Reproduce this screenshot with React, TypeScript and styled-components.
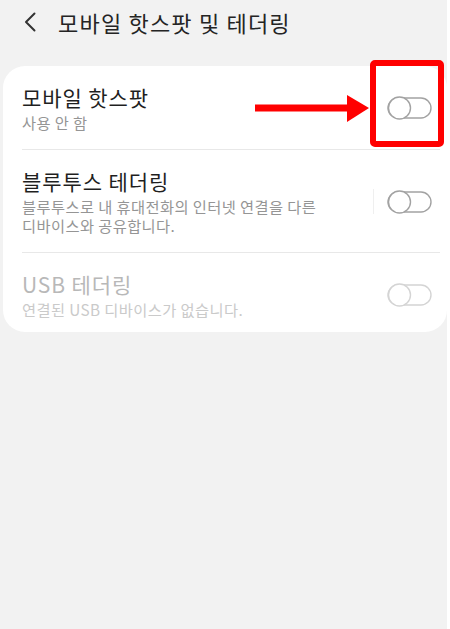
import React from 'react';
import styled, { createGlobalStyle } from 'styled-components';

const GlobalStyle = createGlobalStyle`
  html, body {
    margin: 0;
    padding: 0;
    background: #ffffff;
  }
  body {
    font-family: "Noto Sans CJK KR", "Noto Sans", sans-serif;
  }
`;

const Screen = styled.div`
  position: relative;
  width: 447px;
  height: 629px;
  background: #f2f2f2;
  overflow: hidden;
`;

const Header = styled.header`
  display: flex;
  align-items: center;
  gap: 22px;
  height: 44px;
  padding-left: 24px;
`;

const HeaderTitle = styled.h1`
  margin: 0;
  font-size: 22px;
  font-weight: 400;
  letter-spacing: 1.2px;
  line-height: 28px;
  color: #242424;
`;

const Card = styled.section`
  margin: 22px 0 0 3px;
  width: 444px;
  background: #ffffff;
  border-radius: 22px;
`;

const Row = styled.div`
  display: flex;
  align-items: center;
  padding: 18px 15px 17px 19px;

  &:last-child {
    padding-bottom: 13px;
  }
`;

const Texts = styled.div`
  flex: 1;
  display: flex;
  flex-direction: column;
  gap: 3px;
`;

const Title = styled.div<{ $disabled?: boolean }>`
  font-size: 21px;
  letter-spacing: 0.9px;
  line-height: 26px;
  color: ${p => (p.$disabled ? '#b8b8b8' : '#1f1f1f')};
`;

const Sub = styled.div<{ $disabled?: boolean }>`
  font-size: 15.3px;
  letter-spacing: 0.4px;
  line-height: 19px;
  color: ${p => (p.$disabled ? '#cacaca' : '#959595')};
`;

const Divider = styled.div`
  height: 1px;
  margin: 0 7px 0 19px;
  background: #e8e8e8;
`;

const SideLine = styled.div`
  width: 1px;
  height: 25px;
  margin-right: 13px;
  background: #efefef;
`;

const Annotation = styled.svg`
  position: absolute;
  left: 0;
  top: 0;
  pointer-events: none;
`;

const Chevron = () => (
  <svg width="12" height="20" viewBox="0 0 12 20">
    <polyline points="10.5,1.5 2,10 10.5,18.5" fill="none" stroke="#333" strokeWidth="2" strokeLinecap="round" strokeLinejoin="round" />
  </svg>
);

const Toggle = ({ disabled }: { disabled?: boolean }) => {
  const c = disabled ? '#d4d4d4' : '#a2a2a2';
  return (
    <svg width="45" height="24" viewBox="0 0 45 24">
      <rect x="1" y="2" width="43" height="20" rx="10" fill="#fff" stroke={c} strokeWidth="1.4" />
      <circle cx="12.5" cy="12" r="11" fill="#fff" stroke={c} strokeWidth="1.4" />
    </svg>
  );
};

const App: React.FC = () => {
  return (
    <Screen>
      <GlobalStyle />
      <Header>
        <Chevron />
        <HeaderTitle>모바일 핫스팟 및 테더링</HeaderTitle>
      </Header>
      <Card>
        <Row>
          <Texts>
            <Title>모바일 핫스팟</Title>
            <Sub>사용 안 함</Sub>
          </Texts>
          <Toggle />
        </Row>
        <Divider />
        <Row>
          <Texts>
            <Title>블루투스 테더링</Title>
            <Sub>
              블루투스로 내 휴대전화의 인터넷 연결을 다른
              <br />
              디바이스와 공유합니다.
            </Sub>
          </Texts>
          <SideLine />
          <Toggle />
        </Row>
        <Divider />
        <Row>
          <Texts>
            <Title $disabled>USB 테더링</Title>
            <Sub $disabled>연결된 USB 디바이스가 없습니다.</Sub>
          </Texts>
          <Toggle disabled />
        </Row>
      </Card>
      <Annotation width="450" height="629">
        <rect x="373" y="63" width="68" height="81" rx="2" fill="none" stroke="#ff0000" strokeWidth="6" />
        <rect x="255" y="104.5" width="94" height="7" fill="#ff0000" />
        <polygon points="347,95 369,108 347,122" fill="#ff0000" />
      </Annotation>
    </Screen>
  );
};

export default App;
